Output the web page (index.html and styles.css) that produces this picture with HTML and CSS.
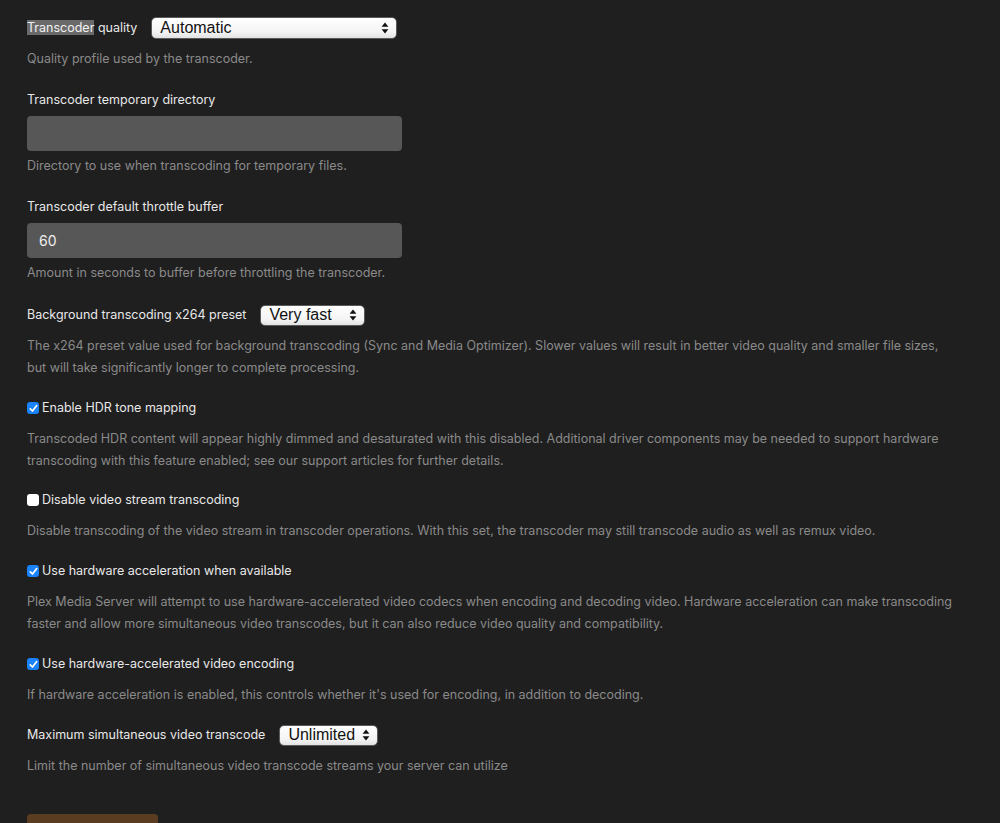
FILE: index.html
```html
<!DOCTYPE html>
<html lang="en">
<head>
  <meta charset="UTF-8">
  <title>Transcoder Settings</title>
  <meta name="viewport" content="width=device-width, initial-scale=1.0">
  <link rel="stylesheet" href="styles.css">
</head>
<body>
  <form class="settings">

    <div class="setting setting-wide">
      <div class="row">
        <label class="label"><span class="selected-text">Transcoder</span> quality</label>
        <span class="select select-quality">
          <span class="select-value">Automatic</span>
          <svg class="select-arrows" width="8" height="12" viewBox="0 0 8 12"><path d="M4 0.6L7.4 4.8H0.6Z M4 11.4L7.4 7.2H0.6Z" fill="#111"/></svg>
        </span>
      </div>
      <div class="desc">Quality profile used by the transcoder.</div>
    </div>

    <div class="setting setting-wide">
      <label class="label label-block">Transcoder temporary directory</label>
      <div class="text-input"></div>
      <div class="desc desc-tight">Directory to use when transcoding for temporary files.</div>
    </div>

    <div class="setting setting-wide">
      <label class="label label-block">Transcoder default throttle buffer</label>
      <div class="text-input">60</div>
      <div class="desc desc-tight">Amount in seconds to buffer before throttling the transcoder.</div>
    </div>

    <div class="setting">
      <div class="row">
        <label class="label">Background transcoding x264 preset</label>
        <span class="select select-preset">
          <span class="select-value">Very fast</span>
          <svg class="select-arrows" width="8" height="12" viewBox="0 0 8 12"><path d="M4 0.6L7.4 4.8H0.6Z M4 11.4L7.4 7.2H0.6Z" fill="#111"/></svg>
        </span>
      </div>
      <div class="desc">The x264 preset value used for background transcoding (Sync and Media Optimizer). Slower values will result in better video quality and smaller file sizes, but will take significantly longer to complete processing.</div>
    </div>

    <div class="setting setting-narrow">
      <div class="row">
        <span class="checkbox checked"><svg width="9" height="9" viewBox="0 0 9 9"><path d="M1.3 4.8L3.5 7L7.7 1.6" fill="none" stroke="#fff" stroke-width="1.7" stroke-linecap="round" stroke-linejoin="round"/></svg></span>
        <label class="label">Enable HDR tone mapping</label>
      </div>
      <div class="desc">Transcoded HDR content will appear highly dimmed and desaturated with this disabled. Additional driver components may be needed to support hardware transcoding with this feature enabled; see our support articles for further details.</div>
    </div>

    <div class="setting">
      <div class="row">
        <span class="checkbox"></span>
        <label class="label">Disable video stream transcoding</label>
      </div>
      <div class="desc">Disable transcoding of the video stream in transcoder operations. With this set, the transcoder may still transcode audio as well as remux video.</div>
    </div>

    <div class="setting">
      <div class="row">
        <span class="checkbox checked"><svg width="9" height="9" viewBox="0 0 9 9"><path d="M1.3 4.8L3.5 7L7.7 1.6" fill="none" stroke="#fff" stroke-width="1.7" stroke-linecap="round" stroke-linejoin="round"/></svg></span>
        <label class="label">Use hardware acceleration when available</label>
      </div>
      <div class="desc">Plex Media Server will attempt to use hardware-accelerated video codecs when encoding and decoding video. Hardware acceleration can make transcoding faster and allow more simultaneous video transcodes, but it can also reduce video quality and compatibility.</div>
    </div>

    <div class="setting">
      <div class="row">
        <span class="checkbox checked"><svg width="9" height="9" viewBox="0 0 9 9"><path d="M1.3 4.8L3.5 7L7.7 1.6" fill="none" stroke="#fff" stroke-width="1.7" stroke-linecap="round" stroke-linejoin="round"/></svg></span>
        <label class="label">Use hardware-accelerated video encoding</label>
      </div>
      <div class="desc">If hardware acceleration is enabled, this controls whether it's used for encoding, in addition to decoding.</div>
    </div>

    <div class="setting setting-last">
      <div class="row">
        <label class="label">Maximum simultaneous video transcode</label>
        <span class="select select-max">
          <span class="select-value">Unlimited</span>
          <svg class="select-arrows" width="8" height="12" viewBox="0 0 8 12"><path d="M4 0.6L7.4 4.8H0.6Z M4 11.4L7.4 7.2H0.6Z" fill="#111"/></svg>
        </span>
      </div>
      <div class="desc">Limit the number of simultaneous video transcode streams your server can utilize</div>
    </div>

    <button type="submit" class="save-btn">Save Changes</button>
  </form>
</body>
</html>
```

FILE: styles.css
```css
body {
  margin: 0;
  background: #1f1f1f;
  font-family: Inter, "Noto Sans", sans-serif;
  color: #e6e6e6;
  overflow: hidden;
}
.settings {
  width: 925px;
  padding: 17px 0 0 27px;
}
.setting {
  margin-bottom: 18px;
}
.setting-wide {
  margin-bottom: 20px;
}
.setting-narrow {
  margin-bottom: 17px;
}
.setting-last {
  margin-bottom: 19px;
}
.row {
  display: flex;
  align-items: center;
  height: 22px;
}
.label {
  font-size: 12.5px;
  line-height: 20px;
  color: #e8e8e8;
}
.label-block {
  display: block;
  margin-bottom: 6px;
}
.selected-text {
  background: #6a6a6a;
  color: #f2f2f2;
}
.desc {
  margin-top: 9px;
  font-size: 12.5px;
  line-height: 22px;
  color: #8a8a8a;
}
.desc-tight {
  margin-top: 4px;
}

/* native-looking popup buttons */
.select {
  display: flex;
  align-items: center;
  justify-content: space-between;
  box-sizing: border-box;
  height: 22px;
  margin-left: 14px;
  padding: 0 7px 0 8px;
  background: linear-gradient(#ffffff, #f4f4f4 70%, #e2e2e2);
  border: 1px solid #5a5a5a;
  border-radius: 5px;
  font-family: "Liberation Sans", Arial, sans-serif;
  font-size: 16px;
  color: #111;
}
.select-quality {
  width: 246px;
}
.select-preset {
  width: 105px;
  height: 21px;
}
.select-max {
  width: 99px;
  height: 21px;
}

.text-input {
  box-sizing: border-box;
  width: 375px;
  height: 35px;
  padding: 0 12px;
  background: #575757;
  border-radius: 4px;
  font-size: 14px;
  line-height: 35px;
  color: #f0f0f0;
}

.checkbox {
  display: flex;
  align-items: center;
  justify-content: center;
  box-sizing: border-box;
  width: 12px;
  height: 12px;
  margin-right: 3px;
  background: #fff;
  border-radius: 3px;
}
.checkbox.checked {
  background: #1a82fb;
}

.save-btn {
  margin-top: 18px;
  width: 131px;
  height: 46px;
  background: #5a3d21;
  border: none;
  border-radius: 4px;
  font-family: Inter, sans-serif;
  font-size: 14px;
  font-weight: 600;
  color: #fff;
}
```
